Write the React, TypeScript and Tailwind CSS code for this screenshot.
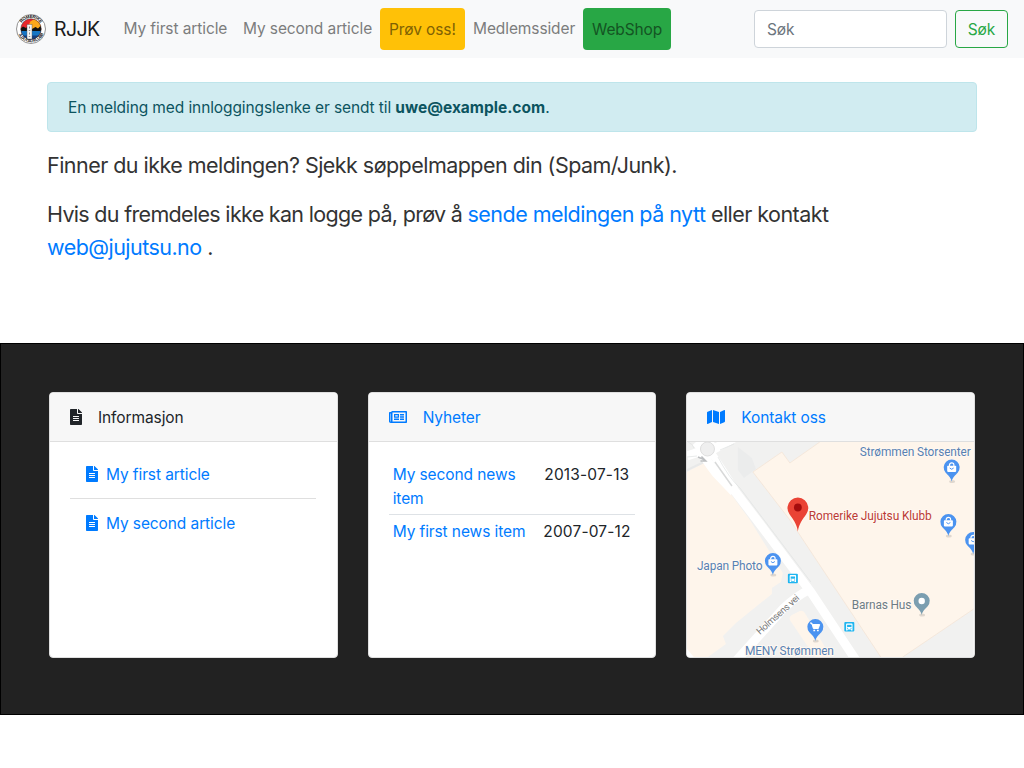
import type { ReactNode } from "react";
import { FaFileAlt, FaRegNewspaper, FaMap } from "react-icons/fa";

function Logo() {
  return (
    <svg width="30" height="30" viewBox="0 0 60 60" className="shrink-0">
      <defs>
        <clipPath id="disc"><circle cx="30" cy="30" r="20.5" /></clipPath>
        <path id="arcTop" d="M8 30A22 22 0 0 1 52 30" />
        <path id="arcBottom" d="M2.5 29A27.5 27.5 0 0 0 57.5 29" />
      </defs>
      <circle cx="30" cy="30" r="29" fill="#fff" stroke="#777" strokeWidth="1.6" />
      <g clipPath="url(#disc)">
        <rect width="60" height="60" fill="#e8262b" />
        <circle cx="38" cy="23" r="12" fill="#fba81c" />
        <path d="M6 32L14 25L20 28L25 24L32 30L39 26L44 29L49 24L56 32V36H6Z" fill="#111" />
        <rect y="34" width="60" height="26" fill="#1675c4" />
        <rect y="43" width="60" height="17" fill="#123d82" />
      </g>
      <circle cx="30" cy="30" r="20.5" fill="none" stroke="#333" strokeWidth="1" />
      <rect x="22" y="21" width="10" height="29" fill="#f4f4f4" stroke="#555" strokeWidth="0.8" />
      <path d="M27 25V29M25.5 33H28.5M27 37V41M25.5 45H28.5" stroke="#666" strokeWidth="1.5" />
      <g fontFamily="Liberation Sans, sans-serif" fontWeight="700" fontSize="9" fill="#111">
        <text textAnchor="middle"><textPath href="#arcTop" startOffset="50%">ROMERIKE</textPath></text>
        <text textAnchor="middle" fontSize="8.5"><textPath href="#arcBottom" startOffset="50%">JUJUTSU KLUBB</textPath></text>
      </g>
    </svg>
  );
}

function Pin({ x, y, color = "#4b93f0", children }: { x: number; y: number; color?: string; children?: ReactNode }) {
  return (
    <g transform={`translate(${x} ${y})`}>
      <ellipse cx="0.5" cy="14" rx="3" ry="1.5" fill="#000" opacity="0.12" />
      <path d="M0 14C-1.2 9-4 7.5-6 5.2A8 8 0 1 1 6 5.2C4 7.5 1.2 9 0 14Z" fill={color} />
      {children}
    </g>
  );
}

function Bag() {
  return (
    <g>
      <path d="M-2.2-1.5V-2.5A2.2 2.2 0 0 1 2.2-2.5V-1.5" fill="none" stroke="#fff" strokeWidth="1.2" />
      <rect x="-4.5" y="-1.8" width="9" height="6.2" rx="0.8" fill="#fff" />
      <path d="M-2 0.5Q0 3 2 0.5" fill="none" stroke="#4b93f0" />
    </g>
  );
}

function Stop({ x, y }: { x: number; y: number }) {
  return (
    <g transform={`translate(${x} ${y})`}>
      <rect x="-5" y="-4.8" width="10" height="9.6" rx="1" fill="#1eb5f0" />
      <path d="M-3.2-2.6Q-3.2-3.4-2.4-3.4H2.4Q3.2-3.4 3.2-2.6V3.6H1.8V2.8H-1.8V3.6H-3.2Z" fill="#fff" />
      <rect x="-2.2" y="-2" width="4.4" height="2.2" fill="#1eb5f0" />
      <path d="M-2.2 1.5H-1.2M1.2 1.5H2.2" stroke="#1eb5f0" />
    </g>
  );
}

function StreetMap() {
  return (
    <svg className="block h-full w-full" viewBox="687 442 287 215" preserveAspectRatio="none" fontFamily="Roboto, sans-serif" fontSize="12">
      <rect x="687" y="442" width="287" height="215" fill="#f1f1f0" />
      <path d="M687 472L704 463L720 479L750 520L783 573L781 582L772 588V594L736 623L723 636L726 644L708 657H693L687 650Z" fill="#fef5eb" />
      <path d="M820 442L790 463L782 452L753 472L790 520L881 657H903L974 609V442Z" fill="#fef5eb" />
      <path d="M820 442L790 463L782 452L753 472L790 520L881 657M903 657L974 609" fill="none" stroke="#f4e5d7" strokeWidth="0.8" />
      <path d="M790 620Q789 617 792 615L800 611Q803 610 805 613L831 657H815Z" fill="#fef5eb" />
      <path d="M687 470L704 462" fill="none" stroke="#e8e9e9" strokeWidth="2" />
      <path d="M738 447L752 458L756 469L744 478L738 470Z" fill="#ebecec" />
      <g fill="none" stroke="#fff">
        <path d="M687 456L699 452M696 442L703 450M714 449L734 438" strokeWidth="9" />
        <path d="M700 450Q709 464 716 473L734 492" strokeWidth="9" />
        <path d="M713 455Q725 473 735 489" strokeWidth="7" />
        <path d="M731 486L760 524L811 592L856 660" strokeWidth="9" />
        <path d="M809 590Q798 595 784 608L736 661" strokeWidth="9" />
        <path d="M682 647L694 661" strokeWidth="5" />
      </g>
      <circle cx="707.5" cy="449" r="9.5" fill="#fff" />
      <circle cx="707.5" cy="449" r="7" fill="#efefef" stroke="#dedede" />
      <path d="M715 462L732 486" stroke="#d8d9d9" strokeWidth="1.5" />
      <path d="M718 457Q729 478 740 488L811 582M687 457L697 456M688 442Q693 444 694 448M720 450L734 444" fill="none" stroke="#e0e2e2" strokeWidth="0.7" />
      <path d="M698 457L705 460M701.5 456.5L706 461L700.5 461" fill="none" stroke="#bcbec0" strokeWidth="1.4" />
      <g stroke="#fff8f1" strokeWidth="2" paintOrder="stroke" strokeLinejoin="round">
        <text x="860" y="456" fill="#5781b3" textLength="111">Strømmen Storsenter</text>
        <text x="809" y="520" fill="#bb3b36" textLength="123">Romerike Jujutsu Klubb</text>
        <text x="697" y="570" fill="#5781b3" textLength="65.5">Japan Photo</text>
        <text x="852" y="609.5" fill="#6d7d86" textLength="59.5">Barnas Hus</text>
        <text x="745" y="655" fill="#5781b3" textLength="89">MENY Strømmen</text>
      </g>
      <text transform="translate(760 635) rotate(-42)" fontSize="9.5" fill="#777" textLength="54">Holmsens vei</text>
      <Pin x={952} y={467.5}><Bag /></Pin>
      <Pin x={948.7} y={522}><Bag /></Pin>
      <Pin x={973.5} y={540}><Bag /></Pin>
      <Pin x={773} y={561}><Bag /></Pin>
      <Pin x={815.5} y={627}>
        <path d="M-5-4H-3.5L-2 1.5H3L4.3-2.5H-3Z" fill="#fff" stroke="#fff" />
        <path d="M-2 3.5H3.5" stroke="#fff" strokeWidth="1.6" strokeDasharray="1.8 1.8" />
      </Pin>
      <Pin x={922} y={601} color="#7b9eb0"><circle r="3.2" fill="#fff" /></Pin>
      <path d="M798 531.5C797 524 793 519 789.5 514A10.4 10.4 0 1 1 806.5 514C803 519 799 524 798 531.5Z" fill="#ea4335" />
      <circle cx="798" cy="507.5" r="3.9" fill="#a50d0d" />
      <Stop x={793} y={578.5} />
      <Stop x={849.5} y={626.8} />
    </svg>
  );
}

function Card({ icon, title, link, children }: { icon: ReactNode; title: string; link?: boolean; children: ReactNode }) {
  return (
    <section className="flex h-[266px] min-w-0 flex-col overflow-hidden rounded border border-[#dfdfdf] bg-white">
      <header className={`flex h-[49px] shrink-0 items-center border-b border-[#dfdfdf] bg-[#f7f7f7] px-5 ${link ? "text-[#007bff]" : "text-[#212529]"}`}>
        {icon}
        <span className="ml-4 pt-0.5">{title}</span>
      </header>
      {children}
    </section>
  );
}

export default function App() {
  return (
    <div className="min-h-screen bg-white font-[Inter,sans-serif] text-[15.5px] leading-6 tracking-[-0.1px] text-[#212529]">
      <nav className="flex h-[58px] items-center bg-[#f8f9fa] px-4">
        <a className="flex w-[99.5px] items-center text-[19.5px] tracking-[-0.6px] text-[#1b1c1d]">
          <Logo />
          <span className="ml-2">RJJK</span>
        </a>
        <div className="flex items-center text-[#7c7d7d]">
          <a className="w-[119.5px] px-2 whitespace-nowrap">My first article</a>
          <a className="w-[145px] px-2 whitespace-nowrap">My second article</a>
          <a className="h-[42px] w-[85px] rounded bg-[#ffc107] px-[9px] pt-2.5 whitespace-nowrap text-[#806104]">Prøv oss!</a>
          <a className="w-[118px] px-2 whitespace-nowrap">Medlemssider</a>
          <a className="h-[42px] w-[88px] rounded bg-[#28a745] px-[9px] pt-2.5 whitespace-nowrap text-[#145423]">WebShop</a>
        </div>
        <form className="ml-auto flex gap-2">
          <input placeholder="Søk" className="h-[38px] w-[193px] rounded border border-[#ced4da] bg-white px-3 placeholder:text-[#6c757d]" />
          <button type="button" className="h-[38px] w-[53px] rounded border border-[#28a745] pt-px text-[#28a745]">Søk</button>
        </form>
      </nav>

      <main className="flex h-[285px] flex-col px-[47px] pt-6">
        <div className="mb-[17px] h-[50px] rounded border border-[#bee5eb] bg-[#d1ecf1] px-5 pt-[13px] text-[#0c5460]">
          En melding med innloggingslenke er sendt til <b className="font-bold tracking-normal">uwe@example.com</b>.
        </div>
        <div className="flex flex-col gap-4 text-[21.5px] leading-[33px] tracking-[-0.54px] text-[#333]">
          <p>Finner du ikke meldingen? Sjekk søppelmappen din (Spam/Junk).</p>
          <p>
            <span className="tracking-[-0.68px]">Hvis du fremdeles ikke kan logge på, prøv å </span>
            <a className="text-[#007bff]">sende meldingen på nytt</a> eller kontakt
            <br />
            <a className="text-[#007bff]">web@jujutsu.no</a> .
          </p>
        </div>
      </main>

      <footer className="grid h-[372px] grid-cols-3 gap-[30px] border border-black bg-[#222] px-12 pt-12">
        <Card title="Informasjon" icon={<FaFileAlt className="h-4 w-3" />}>
          <ul className="mr-[21px] ml-5 mt-2 text-[#007bff]">
            {["My first article", "My second article"].map((name, i) => (
              <li key={name} className={`flex items-center gap-2 px-4 ${i === 0 ? "h-[49px] border-b border-[#dfdfdf]" : "h-12"}`}>
                <FaFileAlt className="h-4 w-3" />
                <span className="pt-0.5">{name}</span>
              </li>
            ))}
          </ul>
        </Card>
        <Card link title="Nyheter" icon={<FaRegNewspaper className="h-4 w-[18px]" />}>
          <div className="mx-5 mt-5">
            <div className="flex h-[53px] justify-between border-b border-[#dee2e6] px-1 pt-px">
              <a className="w-[130px] text-[#007bff]">My second news<br />item</a>
              <span className="w-[87px] tracking-[0.15px] whitespace-nowrap">2013-07-13</span>
            </div>
            <div className="flex justify-between px-1 pt-[5px]">
              <a className="whitespace-nowrap text-[#007bff]">My first news item</a>
              <span className="w-[88px] tracking-[0.15px] whitespace-nowrap">2007-07-12</span>
            </div>
          </div>
        </Card>
        <Card link title="Kontakt oss" icon={<FaMap className="h-4 w-[18px]" />}>
          <div className="min-h-0 grow"><StreetMap /></div>
        </Card>
      </footer>
    </div>
  );
}
